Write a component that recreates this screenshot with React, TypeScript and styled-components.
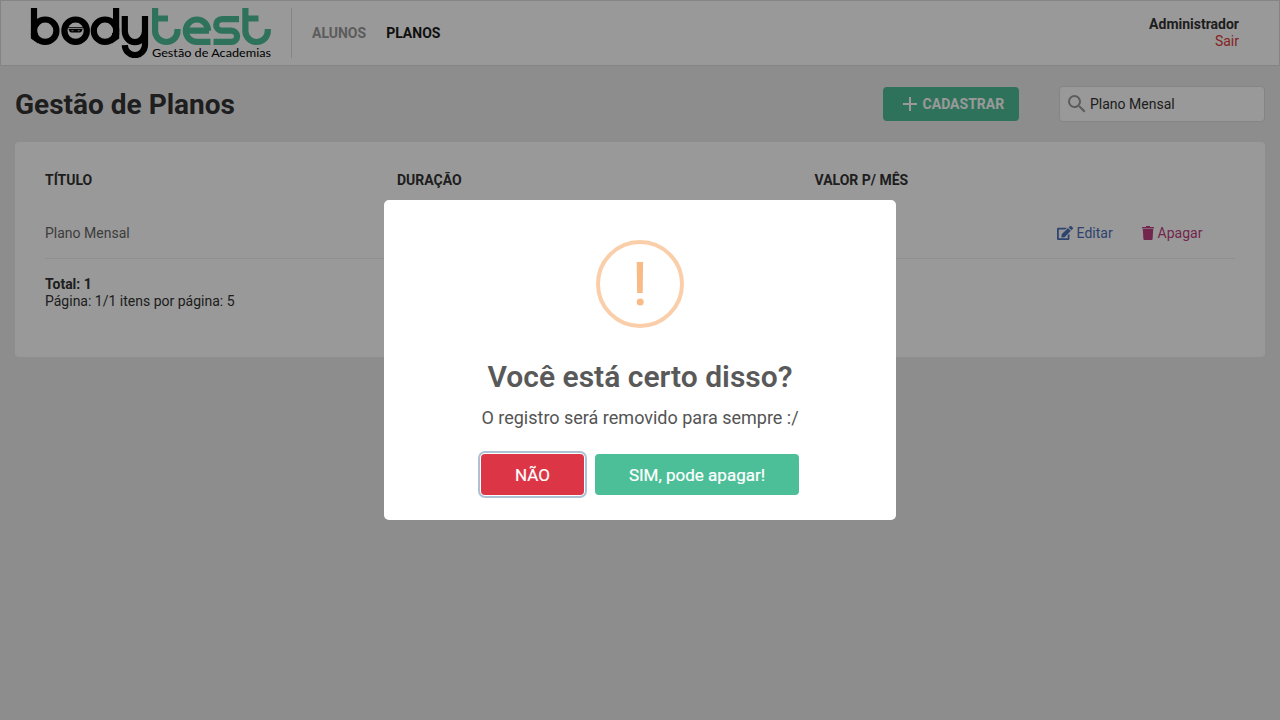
import React from 'react';
import styled, { createGlobalStyle } from 'styled-components';
import { FaEdit } from 'react-icons/fa';
import { MdAdd, MdSearch } from 'react-icons/md';

const GlobalStyle = createGlobalStyle`
  * { margin: 0; padding: 0; box-sizing: border-box; }
  html, body, #root { height: 100%; }
  body {
    background: #ebebeb;
    color: #333;
    font: 14px/17px Roboto, "Liberation Sans", sans-serif;
    overflow: hidden;
  }
  button, input { font-family: inherit; }
`;

const Header = styled.header`
  display: flex;
  align-items: center;
  justify-content: space-between;
  height: 66px;
  padding: 0 40px 0 29px;
  background: #fff;
  border: 1px solid #ddd;
`;

const Nav = styled.nav`
  display: flex;
  align-items: center;
`;

const LogoFrame = styled.div`
  width: 262px;
  height: 50px;
  margin-right: 20px;
  border-right: 1px solid #ddd;
`;

const NavLink = styled.a<{ $active?: boolean }>`
  margin-right: 20px;
  font-weight: 700;
  color: ${(p) => (p.$active ? '#1a1a1a' : '#999')};
`;

const Profile = styled.div`
  display: flex;
  flex-direction: column;
  align-items: flex-end;
  margin-bottom: 1px;
`;

const SignOut = styled.a`
  color: #de3b3b;
`;

const Main = styled.main`
  padding: 20px 15px;
`;

const TitleBar = styled.div`
  display: flex;
  align-items: center;
  justify-content: space-between;
  height: 36px;
  margin-bottom: 20px;
`;

const PageTitle = styled.h1`
  padding-top: 2px;
  font-size: 28px;
  line-height: 34px;
  font-weight: 700;
`;

const Tools = styled.div`
  display: flex;
  align-items: center;
  gap: 40px;
`;

const AddButton = styled.button`
  display: flex;
  align-items: center;
  gap: 0.6px;
  width: 136px;
  height: 34px;
  padding-left: 15px;
  border: 0;
  border-radius: 4px;
  background: #4dbf98;
  color: #fff;
  font-size: 14px;
  font-weight: 700;
`;

const SearchBox = styled.label`
  display: flex;
  align-items: center;
  gap: 1px;
  width: 206px;
  height: 36px;
  padding-left: 5px;
  border: 1px solid #ddd;
  border-radius: 4px;
  background: #fff;
  color: #999;
`;

const SearchInput = styled.input`
  width: 160px;
  border: 0;
  outline: 0;
  background: transparent;
  color: #333;
  font-size: 14px;
`;

const Card = styled.section`
  height: 215px;
  padding: 20px 30px;
  border-radius: 4px;
  background: #fff;
`;

const Row = styled.div`
  display: grid;
  grid-template-columns: 352px 417.5px 242.5px 85px 1fr;
  align-items: center;
  height: 51px;
  color: #666;
  border-bottom: 1px solid #eee;
`;

const HeadRow = styled(Row)`
  height: 46px;
  padding-bottom: 10px;
  font-weight: 700;
  color: #333;
  border-bottom: 0;
`;

const Action = styled.a<{ $color: string }>`
  display: flex;
  align-items: center;
  gap: 3.6px;
  color: ${(p) => p.$color};
`;

const Summary = styled.div`
  padding-top: 17px;
`;

const Backdrop = styled.div`
  position: fixed;
  inset: 0;
  display: flex;
  align-items: center;
  justify-content: center;
  background: rgba(0, 0, 0, 0.4);
`;

const Dialog = styled.div`
  display: flex;
  flex-direction: column;
  align-items: center;
  width: 512px;
  height: 320px;
  padding-top: 40px;
  border-radius: 5px;
  background: #fff;
`;

const DialogTitle = styled.h2`
  margin-top: 31px;
  font-size: 30px;
  line-height: 36px;
  font-weight: 600;
  color: #595959;
`;

const DialogText = styled.p`
  margin-top: 12px;
  font-size: 18px;
  line-height: 22px;
  color: #545454;
`;

const DialogActions = styled.div`
  display: flex;
  gap: 11px;
  margin-top: 25px;
`;

const DialogButton = styled.button<{ $width: number; $color: string; $focused?: boolean }>`
  width: ${(p) => p.$width}px;
  height: 41px;
  border: 0;
  border-radius: 4px;
  outline: 0;
  background: ${(p) => p.$color};
  color: #fff;
  font-size: 17px;
  font-weight: 400;
  -webkit-text-stroke: 0.2px #fff;
  box-shadow: ${(p) => (p.$focused ? '0 0 0 1px #fff, 0 0 0 3px rgba(50, 100, 150, 0.4)' : 'none')};
`;

const Logo = () => (
  <svg width="241" height="50" viewBox="31 8 241 50" fill="none" strokeWidth="6.2">
    <g stroke="#000">
      <path d="M35 8V35" />
      <path d="M31.900 33V38.500L39 43.500V33z" fill="#000" stroke="none" />
      <circle cx="46.200" cy="30.700" r="11.200" />
      <circle cx="76.600" cy="30.700" r="11.200" />
      <circle cx="106" cy="30.700" r="11.200" />
      <path d="M117.100 8V35" />
      <path d="M120.200 33V38.500L113 43.500V33z" fill="#000" stroke="none" />
      <path d="M125.800 16V31a10.100 11.200 0 0 0 20.200 0V16M146 29V44.500a10.100 10.300 0 0 1-20.200.6" />
    </g>
    <g fill="#000">
      <path d="M68 27.200h17.200v1H68z" />
      <path d="M69.500 29h14.200l-1 2.200c-.6 1-1.600 1.400-3 1.400h-6.200c-1.400 0-2.400-.4-3-1.400z" />
    </g>
    <path d="M72.200 30.300h2.600l-.6 1h-1.500zM78.400 30.300H81l-.5 1H79z" fill="#aaa" />
    <g stroke="#4dbf98">
      <path d="M156.100 8V31a11.200 11 0 0 0 22.400 0V29M156 18.500h13" />
      <path d="M186.500 30.700h23.500M209 30.700a11.100 11.200 0 1 0-11 11.200h13.500" />
      <path d="M240 19.100H223a5.800 5.800 0 0 0 0 11.600h9.500a5.600 5.600 0 0 1 0 11.200H214.500" />
      <path d="M246.400 8V31a11.200 11 0 0 0 22.400 0V29M246 18.500h13.500" />
    </g>
    <text x="153" y="57.300" textLength="119" lengthAdjust="spacingAndGlyphs" fill="#000" fontFamily="Lato, sans-serif" fontSize="11">
      Gestão de Academias
    </text>
  </svg>
);

const TrashIcon = () => (
  <svg width="12" height="14" viewBox="0 0 12 14" fill="currentColor">
    <path d="M4 0h4v1h4v1H0V1h4z" />
    <path d="M0 2h12v1H0z" opacity=".45" />
    <path d="M.8 3h10.400l-.6 10a1 1 0 0 1-1 1H2.400a1 1 0 0 1-1-1z" />
  </svg>
);

const WarningIcon = () => (
  <svg width="88" height="88" viewBox="0 0 88 88">
    <circle cx="44" cy="44" r="42" fill="none" stroke="#facea8" strokeWidth="4" />
    <path d="M40.700 22h6.400l-.4 31h-5.600z" fill="#f8bb86" />
    <circle cx="44.200" cy="62" r="3.500" fill="#f8bb86" />
  </svg>
);

export default function App() {
  return (
    <>
      <GlobalStyle />
      <Header>
        <Nav>
          <LogoFrame><Logo /></LogoFrame>
          <NavLink>ALUNOS</NavLink>
          <NavLink $active>PLANOS</NavLink>
        </Nav>
        <Profile>
          <strong>Administrador</strong>
          <SignOut>Sair</SignOut>
        </Profile>
      </Header>
      <Main>
        <TitleBar>
          <PageTitle>Gestão de Planos</PageTitle>
          <Tools>
            <AddButton><MdAdd size={24} />CADASTRAR</AddButton>
            <SearchBox>
              <MdSearch size={24} />
              <SearchInput defaultValue="Plano Mensal" />
            </SearchBox>
          </Tools>
        </TitleBar>
        <Card>
          <HeadRow>
            <span>TÍTULO</span>
            <span>DURAÇÃO</span>
            <span>VALOR P/ MÊS</span>
          </HeadRow>
          <Row>
            <span>Plano Mensal</span>
            <span />
            <span />
            <Action $color="#4d70b8"><FaEdit size={16} />Editar</Action>
            <Action $color="#bf4080"><TrashIcon />Apagar</Action>
          </Row>
          <Summary>
            <strong>Total: 1</strong>
            <p>Página: 1/1 itens por página: 5</p>
          </Summary>
        </Card>
      </Main>
      <Backdrop>
        <Dialog role="dialog">
          <WarningIcon />
          <DialogTitle>Você está certo disso?</DialogTitle>
          <DialogText>O registro será removido para sempre :/</DialogText>
          <DialogActions>
            <DialogButton $width={103} $color="#dc3545" $focused>NÃO</DialogButton>
            <DialogButton $width={204} $color="#4dbf98">SIM, pode apagar!</DialogButton>
          </DialogActions>
        </Dialog>
      </Backdrop>
    </>
  );
}
